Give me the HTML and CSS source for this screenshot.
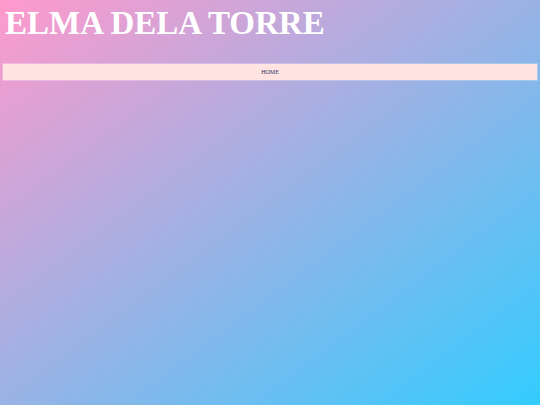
FILE: index.html
```html
<!DOCTYPE html>
<html>
<head>
<meta charset="utf-8">
<title>Elma Dela Torre</title>
<link rel="stylesheet" href="styles.css">
</head>
<body>
<header class="site-header">
  <h1 class="site-title">ELMA DELA TORRE</h1>
</header>
<nav class="nav-bar">
  <a class="nav-link" href="#">HOME</a>
</nav>
</body>
</html>
```
FILE: styles.css
```css
html {
  height: 100%;
}
body {
  margin: 0;
  min-height: 100%;
  padding: 0 3px;
  box-sizing: border-box;
  background: linear-gradient(to bottom right, #ff99cc, #33ccff);
  font-family: "Liberation Serif", "Times New Roman", serif;
}
.site-header {
  padding: 5px 2px 0;
}
.site-title {
  margin: 0;
  font-size: 33px;
  font-weight: bold;
  line-height: 36px;
  color: #ffffff;
}
.nav-bar {
  margin-top: 23px;
  height: 16px;
  background: #ffe4e1;
  box-shadow: 0 0 0 1px rgba(255, 255, 255, 0.25);
  display: flex;
  align-items: center;
  justify-content: center;
}
.nav-link {
  font-size: 6px;
  color: #333366;
  text-decoration: none;
}
```
